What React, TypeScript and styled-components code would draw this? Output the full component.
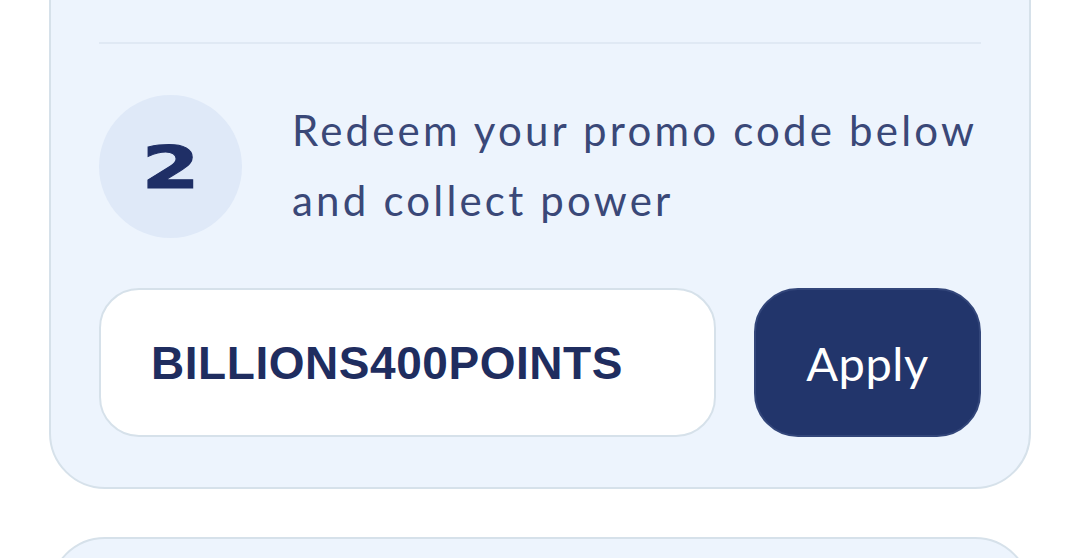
import React, { useState } from "react";
import styled, { createGlobalStyle } from "styled-components";

const GlobalStyle = createGlobalStyle`
    html, body {
        margin: 0;
        padding: 0;
        background: #ffffff;
        overflow: hidden;
    }
`;

export default function App() {
    const [code, setCode] = useState("BILLIONS400POINTS");

    return (
        <Page>
            <GlobalStyle />
            <Card>
                <Divider />
                <Step>
                    <StepNumber>
                        <span>2</span>
                    </StepNumber>
                    <StepText>
                        Redeem your promo code below
                        <br />
                        and collect power
                    </StepText>
                </Step>
                <PromoRow>
                    <PromoInput
                        type="text"
                        value={code}
                        onChange={(e) => setCode(e.target.value)}
                    />
                    <ApplyButton type="button">Apply</ApplyButton>
                </PromoRow>
            </Card>
            <Card $next />
        </Page>
    );
}

const Page = styled.div`
    display: flex;
    flex-direction: column;
    gap: 48px;
    padding: 0 49px;
    margin-top: -60px;
    font-family: Lato, "Open Sans", sans-serif;
`;

const Card = styled.div<{ $next?: boolean }>`
    background-color: #edf4fd;
    border: 2px solid #d6e1ea;
    border-radius: 56px;
    padding: ${(p) => (p.$next ? "0" : "100px 48px 50px")};
    min-height: ${(p) => (p.$next ? "120px" : "0")};
`;

const Divider = styled.div`
    height: 2px;
    background-color: #e0e9f4;
`;

const Step = styled.div`
    display: flex;
    align-items: flex-start;
    gap: 50px;
    margin-top: 51px;
`;

const StepNumber = styled.div`
    flex: 0 0 143px;
    height: 143px;
    border-radius: 50%;
    background-color: #dfe9f8;
    display: flex;
    align-items: center;
    justify-content: center;

    span {
        font-family: "DejaVu Sans", sans-serif;
        font-weight: bold;
        font-size: 59px;
        line-height: 1;
        color: #1f2f66;
        transform: scaleX(1.42);
        margin-top: 2px;
        -webkit-text-stroke: 1px #1f2f66;
    }
`;

const StepText = styled.p`
    margin: 0;
    font-size: 42px;
    line-height: 70px;
    color: #3a4878;
    letter-spacing: 3.2px;
    white-space: nowrap;
`;

const PromoRow = styled.div`
    display: flex;
    gap: 38px;
    margin-top: 50px;
`;

const PromoInput = styled.input`
    flex: 0 0 auto;
    width: 617px;
    min-width: 0;
    box-sizing: border-box;
    height: 149px;
    padding: 0 50px;
    border: 2px solid #d6e1ea;
    border-radius: 40px;
    background-color: #ffffff;
    outline: none;
    font-family: "Liberation Sans", Arial, sans-serif;
    font-weight: bold;
    font-size: 46px;
    letter-spacing: 0.55px;
    color: #1f2d5f;
`;

const ApplyButton = styled.button`
    flex: 0 0 auto;
    width: 227px;
    box-sizing: border-box;
    height: 149px;
    border: 2px solid #33467a;
    border-radius: 44px;
    background-color: #22356b;
    color: #ffffff;
    font-family: Lato, sans-serif;
    font-size: 47px;
    letter-spacing: 0.6px;
    cursor: pointer;
`;
